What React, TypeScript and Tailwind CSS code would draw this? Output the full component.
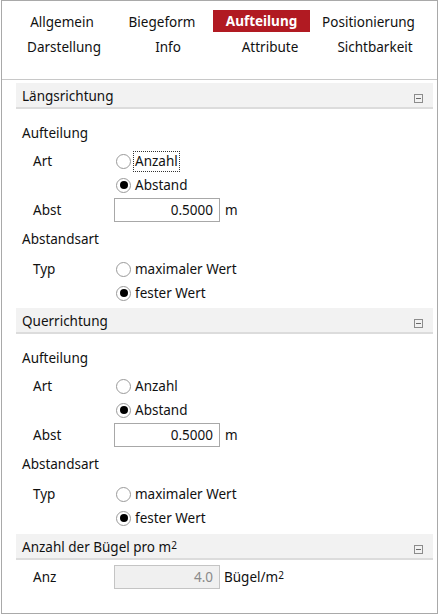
import React from 'react'

// Eigenschaften-Dialog — Registerkarte "Aufteilung" (Bügel).
// Nur Darstellung, keine Logik.

const FONT = { fontFamily: '"Segoe UI", "Noto Sans", "Open Sans", sans-serif' }

const ROW1 = [
  { label: 'Allgemein', w: 'w-[98px]' },
  { label: 'Biegeform', w: 'w-[102px]' },
  { label: 'Aufteilung', w: 'w-[97px]', active: true },
  { label: 'Positionierung', w: 'w-[117px]' },
]

const ROW2 = [
  { label: 'Darstellung', w: 'w-[102px]' },
  { label: 'Info', w: 'w-[106px]' },
  { label: 'Attribute', w: 'w-[98px]' },
  { label: 'Sichtbarkeit', w: 'w-[112px]' },
]

export default function App() {
  return (
    <div className="w-[441px] h-[615px] bg-white text-[13.5px] text-[#111]" style={FONT}>
      <div className="ml-[1px] w-[437px] h-[614px] border border-[#a9a9a9] flex flex-col">
        {/* Reiter */}
        <div className="h-[79px] border-b border-[#c8c8c8] pl-[11px] pt-[9px] flex flex-col gap-[3px] shrink-0">
          <TabRow items={ROW1} />
          <TabRow items={ROW2} />
        </div>

        <div className="pl-[14px] pr-[4px] pt-[3px] flex flex-col">
          <Direction title="Längsrichtung" focusFirst />
          <div className="h-[3px]" />
          <Direction title="Querrichtung" />
          <div className="h-[4px]" />

          <Header>
            Anzahl der Bügel pro m<sup className="text-[10px] relative -top-[3px]">2</sup>
          </Header>
          <div className="mt-[5px] h-[24px] flex items-center">
            <span className="w-[98px] pl-[17px]">Anz</span>
            <NumberBox value="4.0" disabled />
            <span className="ml-[4px]">
              Bügel/m<sup className="text-[10px] relative -top-[3px]">2</sup>
            </span>
          </div>
        </div>
      </div>
    </div>
  )
}

function TabRow({ items }: { items: { label: string; w: string; active?: boolean }[] }) {
  return (
    <div className="flex h-[22px]">
      {items.map(t => (
        <div
          key={t.label}
          className={
            t.active
              ? `${t.w} flex items-center justify-center pt-[1px] bg-[#b11a22] text-white font-bold`
              : `${t.w} flex items-center justify-center pt-[2px]`
          }
        >
          {t.label}
        </div>
      ))}
    </div>
  )
}

function Header({ children }: { children: React.ReactNode }) {
  return (
    <div className="h-[26px] bg-[#f2f2f2] border-b-2 border-[#dcdcdc] flex items-center justify-between pl-[6px] pr-[10px]">
      <span className="pt-[3px]">{children}</span>
      <span className="mt-[6px] w-[9px] h-[9px] border border-[#8c8c8c] flex items-center justify-center">
        <span className="w-[5px] h-px bg-[#6a6a6a]" />
      </span>
    </div>
  )
}

function Direction({ title, focusFirst }: { title: string; focusFirst?: boolean }) {
  return (
    <div className="flex flex-col">
      <Header>{title}</Header>

      <div className="mt-[12px] h-[24px] flex items-center pl-[6px] pt-[1px]">Aufteilung</div>

      <div className="mt-[4px] h-[24px] flex items-center">
        <span className="w-[100px] pl-[17px]">Art</span>
        <Radio label="Anzahl" focused={focusFirst} />
      </div>
      <div className="h-[24px] flex items-center pl-[100px]">
        <Radio label="Abstand" checked />
      </div>

      <div className="mt-[1px] h-[24px] flex items-center">
        <span className="w-[98px] pl-[17px]">Abst</span>
        <NumberBox value="0.5000" />
        <span className="ml-[5px]">m</span>
      </div>

      <div className="mt-[5px] h-[24px] flex items-center pl-[6px] pt-[1px]">Abstandsart</div>

      <div className="mt-[6px] h-[24px] flex items-center">
        <span className="w-[100px] pl-[17px]">Typ</span>
        <Radio label="maximaler Wert" />
      </div>
      <div className="h-[24px] flex items-center pl-[100px]">
        <Radio label="fester Wert" checked />
      </div>
    </div>
  )
}

function Radio({ label, checked, focused }: { label: string; checked?: boolean; focused?: boolean }) {
  return (
    <div className="flex items-center">
      <span className="w-[15px] h-[15px] rounded-full border border-[#9a9a9a] bg-white flex items-center justify-center">
        {checked && <span className="w-[8px] h-[8px] rounded-full bg-black" />}
      </span>
      <span
        className={
          focused
            ? 'ml-[2px] px-[1px] leading-[19px] border border-dotted border-[#333]'
            : 'ml-[4px]'
        }
      >
        {label}
      </span>
    </div>
  )
}

function NumberBox({ value, disabled }: { value: string; disabled?: boolean }) {
  return (
    <div
      className={
        disabled
          ? 'w-[106px] h-[24px] border border-[#c4c4c4] bg-[#f0f0f0] text-[#8a8a8a] flex items-center justify-end pr-[6px]'
          : 'w-[106px] h-[24px] border border-[#a8a8a8] bg-white flex items-center justify-end pr-[6px]'
      }
    >
      {value}
    </div>
  )
}
